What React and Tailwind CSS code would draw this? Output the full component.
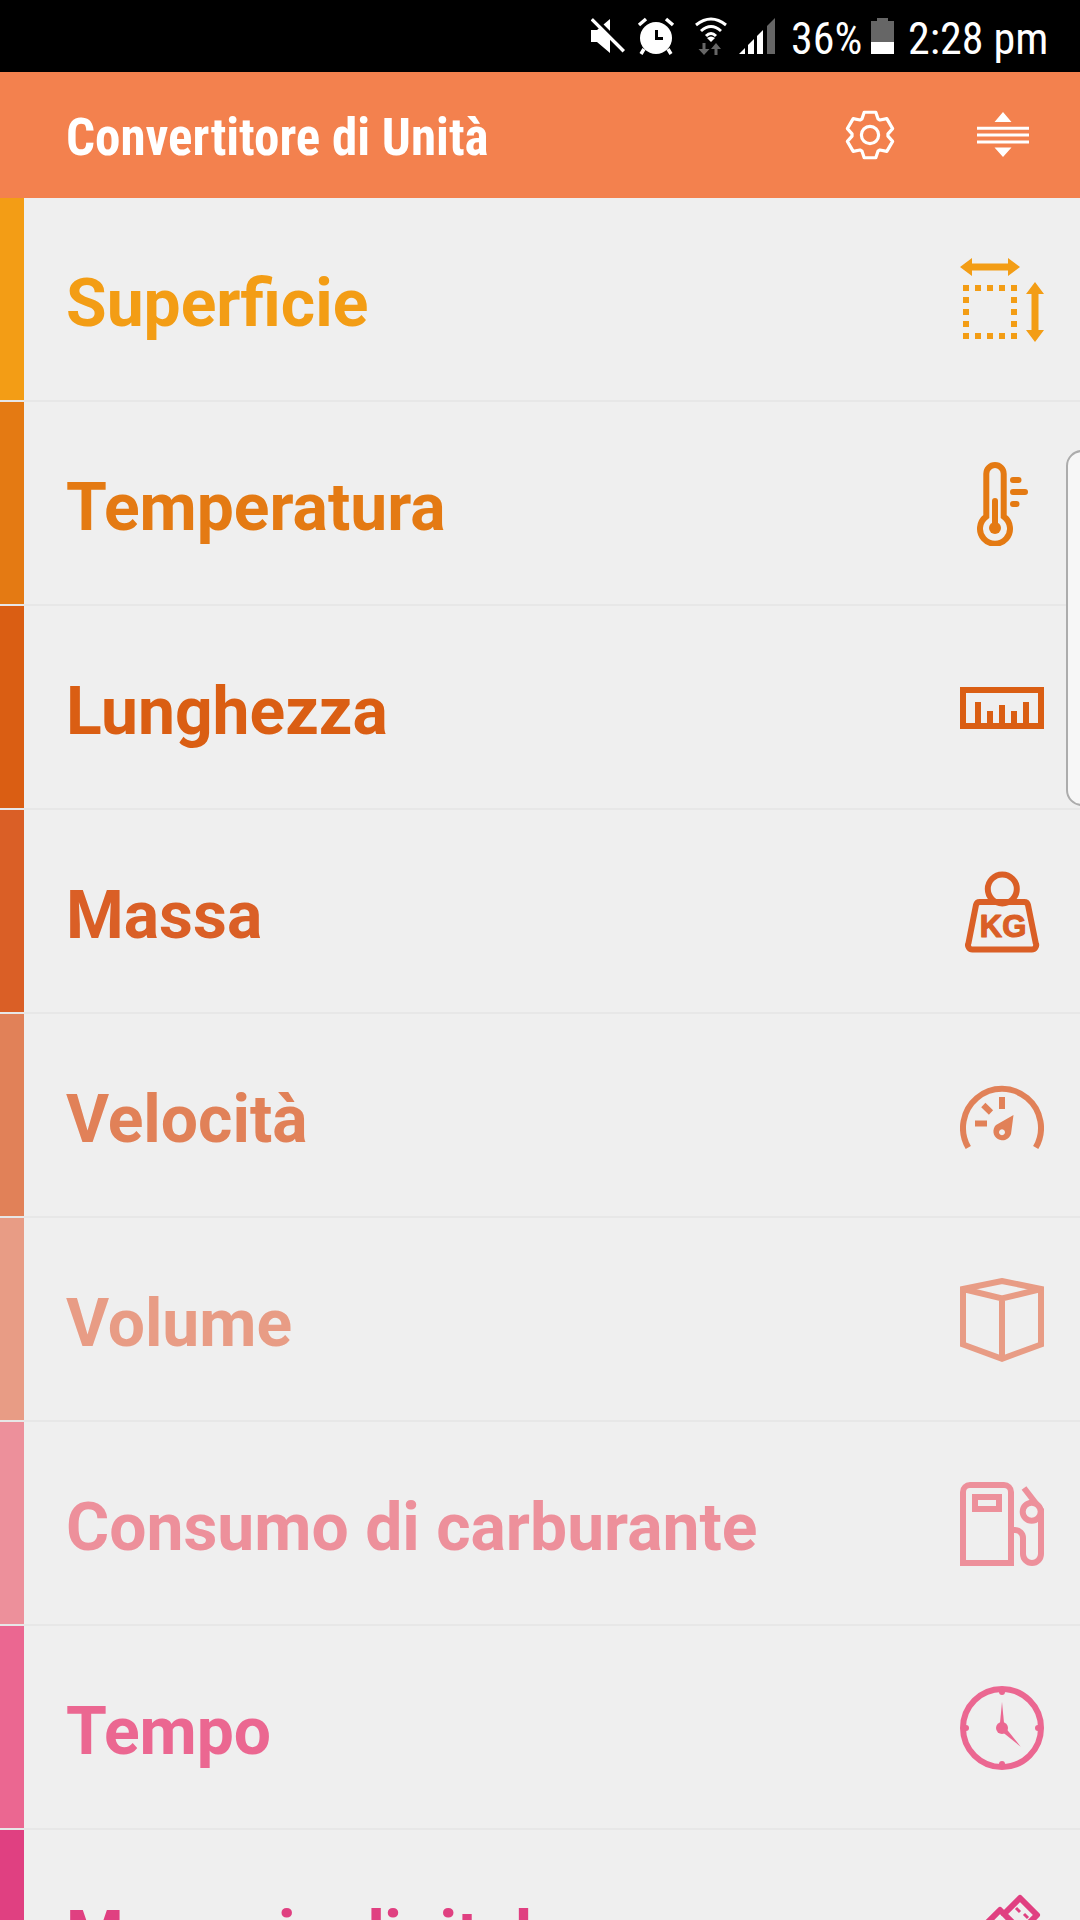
import React from 'react';

const roboto = { fontFamily: 'Roboto, sans-serif' };

const gearPath = (() => {
  // six teeth, tooth on top
  const cx = 27;
  const cy = 27;
  const pts = [];
  for (let i = 0; i < 6; i++) {
    const a = (-90 + i * 60) * (Math.PI / 180);
    const at = (r, off) => [cx + r * Math.cos(a + off), cy + r * Math.sin(a + off)];
    pts.push(at(18, -0.46), at(23.5, -0.25), at(23.5, 0.25), at(18, 0.46));
  }
  return 'M' + pts.map((p) => p[0].toFixed(2) + ' ' + p[1].toFixed(2)).join('L') + 'Z';
})();

const AreaIcon = () => (
  <svg width="84" height="84" viewBox="0 0 84 84" fill="currentColor">
    <path d="M0 9 L12 0 V5.5 H48 V0 L60 9 L48 18 V12.5 H12 V18Z" />
    <path d="M75 24 L84 36 H78.5 V72 H84 L75 84 L66 72 H71.5 V36 H66Z" />
    {[3, 15, 27, 39, 51].map((p) => (
      <React.Fragment key={p}>
        <rect x={p} y="27" width="6" height="6" />
        <rect x={p} y="75" width="6" height="6" />
        <rect x="3" y={p + 24} width="6" height="6" />
        <rect x="51" y={p + 24} width="6" height="6" />
      </React.Fragment>
    ))}
  </svg>
);

const ThermoIcon = () => (
  <svg width="84" height="84" viewBox="0 0 84 84" fill="none" stroke="currentColor" strokeWidth="6" strokeLinecap="round">
    <path d="M26.3 54.5 V11.7 a8.7 8.7 0 0 1 17.4 0 V54.5 a15 15 0 1 1 -17.4 0Z" />
    <path d="M35 39 V64" />
    <circle cx="35" cy="66" r="6" fill="currentColor" stroke="none" />
    <path d="M53 18 H58.5 M53 30 H65 M53 42 H56.5" />
  </svg>
);

const RulerIcon = () => (
  <svg width="84" height="84" viewBox="0 0 84 84" fill="currentColor">
    <path fillRule="evenodd" d="M0 21 H84 V63 H0Z M6 27 V57 H78 V27Z" />
    <rect x="15" y="36" width="6" height="22" />
    <rect x="27" y="45" width="6" height="13" />
    <rect x="39" y="39" width="6" height="19" />
    <rect x="51" y="45" width="6" height="13" />
    <rect x="63" y="36" width="6" height="22" />
  </svg>
);

const WeightIcon = () => (
  <svg width="84" height="84" viewBox="0 0 84 84" fill="none" stroke="currentColor" strokeWidth="6" strokeLinejoin="round">
    <circle cx="42.3" cy="19" r="14.5" />
    <path d="M20 32 H64 a4 4 0 0 1 4 3 L75.7 73 a4.5 4.5 0 0 1 -4.5 6.5 H13 a4.5 4.5 0 0 1 -4.5 -6.5 L16 35 a4 4 0 0 1 4 -3Z" />
    <text x="43" y="66.5" textAnchor="middle" fill="currentColor" stroke="currentColor" strokeWidth="1.2" fontSize="31" fontWeight="700" style={{ fontFamily: '"Liberation Sans", sans-serif' }}>KG</text>
  </svg>
);

const GaugeIcon = () => (
  <svg width="84" height="84" viewBox="0 0 84 84" fill="none" stroke="currentColor" strokeWidth="6">
    <path d="M8.3 73.5 A39 39 0 1 1 75.7 73.5" />
    <path d="M42 23 V35 M15 49.5 H27 M23.3 31 L31 38.5" />
    <path fillRule="evenodd" fill="currentColor" stroke="none" d="M53.5 41 L51 60 A9 9 0 1 1 36 51 Z M42 55.3 a3 3 0 1 0 0.01 0Z" />
  </svg>
);

const CubeIcon = () => (
  <svg width="84" height="84" viewBox="0 0 84 84" fill="none" stroke="currentColor" strokeWidth="6">
    <path d="M3 11 L42 3 L81 11 V66.5 L42 80.7 L3 66.5Z" />
    <path d="M3 11 L42 20.5 L81 11 M42 20.5 V81" />
  </svg>
);

const PumpIcon = () => (
  <svg width="84" height="84" viewBox="0 0 84 84" fill="none" stroke="currentColor" strokeWidth="6">
    <path d="M3 81 V10 a7 7 0 0 1 7 -7 H44 a7 7 0 0 1 7 7 V81Z" />
    <rect x="15" y="15" width="24" height="12" />
    <path d="M54 48 H55 a8 8 0 0 1 8 8 V72 a9 9 0 0 0 18 0 V28 L64 6" />
    <circle cx="71.7" cy="29.7" r="9" fill="#efefef" />
  </svg>
);

const ClockIcon = () => (
  <svg width="84" height="84" viewBox="0 0 84 84" fill="currentColor">
    <circle cx="42" cy="42" r="39" fill="none" stroke="currentColor" strokeWidth="6" />
    <circle cx="42" cy="6" r="3" />
    <circle cx="42" cy="78" r="3" />
    <circle cx="6" cy="42" r="3" />
    <circle cx="78" cy="42" r="3" />
    <circle cx="42" cy="42" r="6" />
    <path d="M39.5 42 L42 16 L44.5 42Z" />
    <path d="M40.5 44.5 L44.5 40.5 L60.7 60.7Z" />
  </svg>
);

const UsbIcon = () => (
  <svg width="84" height="84" viewBox="0 0 84 84" fill="none" stroke="currentColor" strokeWidth="6" strokeLinejoin="round">
    <path d="M60 8 L77 25 L61 41 L44 24Z" />
    <path d="M44 24 L40 20 L6 54 L30 78 L64 44" />
    <path d="M56 18 L60 22 M64 24 L68 28" strokeWidth="3" />
  </svg>
);

const items = [
  { label: 'Superficie', color: 'text-[#f39d15]', bar: 'bg-[#f39d15]', Icon: AreaIcon },
  { label: 'Temperatura', color: 'text-[#e47a13]', bar: 'bg-[#e47a13]', Icon: ThermoIcon },
  { label: 'Lunghezza', color: 'text-[#da5e13]', bar: 'bg-[#da5e13]', Icon: RulerIcon },
  { label: 'Massa', color: 'text-[#da5f26]', bar: 'bg-[#da5f26]', Icon: WeightIcon },
  { label: 'Velocità', color: 'text-[#e18158]', bar: 'bg-[#e18158]', Icon: GaugeIcon },
  { label: 'Volume', color: 'text-[#e89c85]', bar: 'bg-[#e89c85]', Icon: CubeIcon },
  { label: 'Consumo di carburante', color: 'text-[#ed909b]', bar: 'bg-[#ed909b]', Icon: PumpIcon },
  { label: 'Tempo', color: 'text-[#eb6791]', bar: 'bg-[#eb6791]', Icon: ClockIcon },
  { label: 'Memoria digitale', color: 'text-[#e04081]', bar: 'bg-[#e04081]', Icon: UsbIcon },
];

const StatusBar = () => (
  <div className="h-[72px] bg-black flex items-center justify-end text-white relative" style={roboto}>
    <svg width="34" height="36" viewBox="0 0 34 36" fill="white" className="mr-[12px]">
      <path d="M0 12 H6 L19 1 V35 L6 24 H0Z" />
      <path d="M1 1 L33 33" stroke="white" strokeWidth="4" />
      <path d="M1 -3 L37 33" stroke="black" strokeWidth="3" />
    </svg>
    <svg width="38" height="38" viewBox="0 0 38 38" fill="white" className="mr-[20px]">
      <circle cx="19" cy="21" r="16" />
      <path d="M2 8 L9 2 M36 8 L29 2 M7 32 L4 37 M31 32 L34 37" stroke="white" strokeWidth="3.5" />
      <path d="M18 13 H21 V20 H26 V23 H18Z" fill="black" />
    </svg>
    <svg width="32" height="38" viewBox="0 0 32 38" fill="none" className="mr-[12px]">
      <path d="M1 8 Q16 -4 31 8" stroke="white" strokeWidth="3" />
      <path d="M6 14 Q16 5 26 14" stroke="white" strokeWidth="3" />
      <path d="M11 19 Q16 14 21 19" stroke="white" strokeWidth="3" />
      <path d="M16 25 L12 21 Q16 18 20 21Z" fill="white" />
      <path d="M7.5 26 h3 v6 h4 L9 38 L3.5 32 h4Z M19.5 38 v-6 h-3.5 l5 -6 l5 6 h-3.5 v6Z" fill="#666" />
    </svg>
    <svg width="36" height="36" viewBox="0 0 36 36" className="mr-[16px]">
      <path d="M0 36 L6 30 V36Z" fill="white" />
      <path d="M9 27 L15 21 V36 H9Z" fill="white" />
      <path d="M18 18 L24 12 V36 H18Z" fill="white" />
      <path d="M28 8 L36 0 V36 H28Z" fill="#666" />
    </svg>
    <span className="text-[44px] leading-none pt-[6px] font-stretch-condensed w-[72px] mr-[8px] whitespace-nowrap">36%</span>
    <div className="w-[23px] h-[36px] flex flex-col items-center mr-[14px]">
      <div className="w-[11px] h-[3px] bg-[#666]" />
      <div className="w-full h-[21px] bg-[#666]" />
      <div className="w-full h-[12px] bg-white" />
    </div>
    <span className="text-[44px] leading-none pt-[6px] font-stretch-condensed w-[142px] mr-[30px] whitespace-nowrap">2:28 pm</span>
  </div>
);

const Header = () => (
  <div className="h-[126px] bg-[#f3814e] flex items-center pl-[66px] text-white">
    <h1 className="text-[51px] font-bold font-stretch-condensed leading-none pt-[4px] flex-1" style={roboto}>Convertitore di Unità</h1>
    <svg width="54" height="54" viewBox="0 0 54 54" fill="none" stroke="white" strokeWidth="3.2" strokeLinejoin="round" className="mr-[80px]">
      <path d={gearPath} />
      <circle cx="27" cy="27" r="8.6" />
    </svg>
    <svg width="52" height="46" viewBox="0 0 52 46" fill="white" className="mr-[51px]">
      <path d="M26 0 L34.5 10 H17.5Z M17.5 35.5 H34.5 L26 45Z" />
      <path d="M0 16.3 H52 M0 23 H52 M0 30 H52" stroke="white" strokeWidth="3" />
    </svg>
  </div>
);

const Row = ({ label, color, bar, Icon }) => (
  <div className="h-[204px] border-b-2 border-[#e7e7e7] flex shrink-0">
    <div className={`w-[24px] ${bar}`} />
    <div className={`flex-1 flex items-center justify-between pl-[42px] pr-[36px] ${color}`}>
      <span className="text-[66px] font-bold leading-none pt-[10px] whitespace-nowrap" style={roboto}>{label}</span>
      <div className="mt-[2px]">
        <Icon />
      </div>
    </div>
  </div>
);

export default function App() {
  return (
    <div className="w-[1080px] h-[1920px] overflow-hidden bg-[#efefef] relative">
      <StatusBar />
      <Header />
      {items.map((item) => (
        <Row key={item.label} {...item} />
      ))}
      <div className="absolute right-[-20px] top-[450px] w-[34px] h-[356px] bg-[#f7f7f7] border-2 border-[#acacac] rounded-[16px]" />
    </div>
  );
}
